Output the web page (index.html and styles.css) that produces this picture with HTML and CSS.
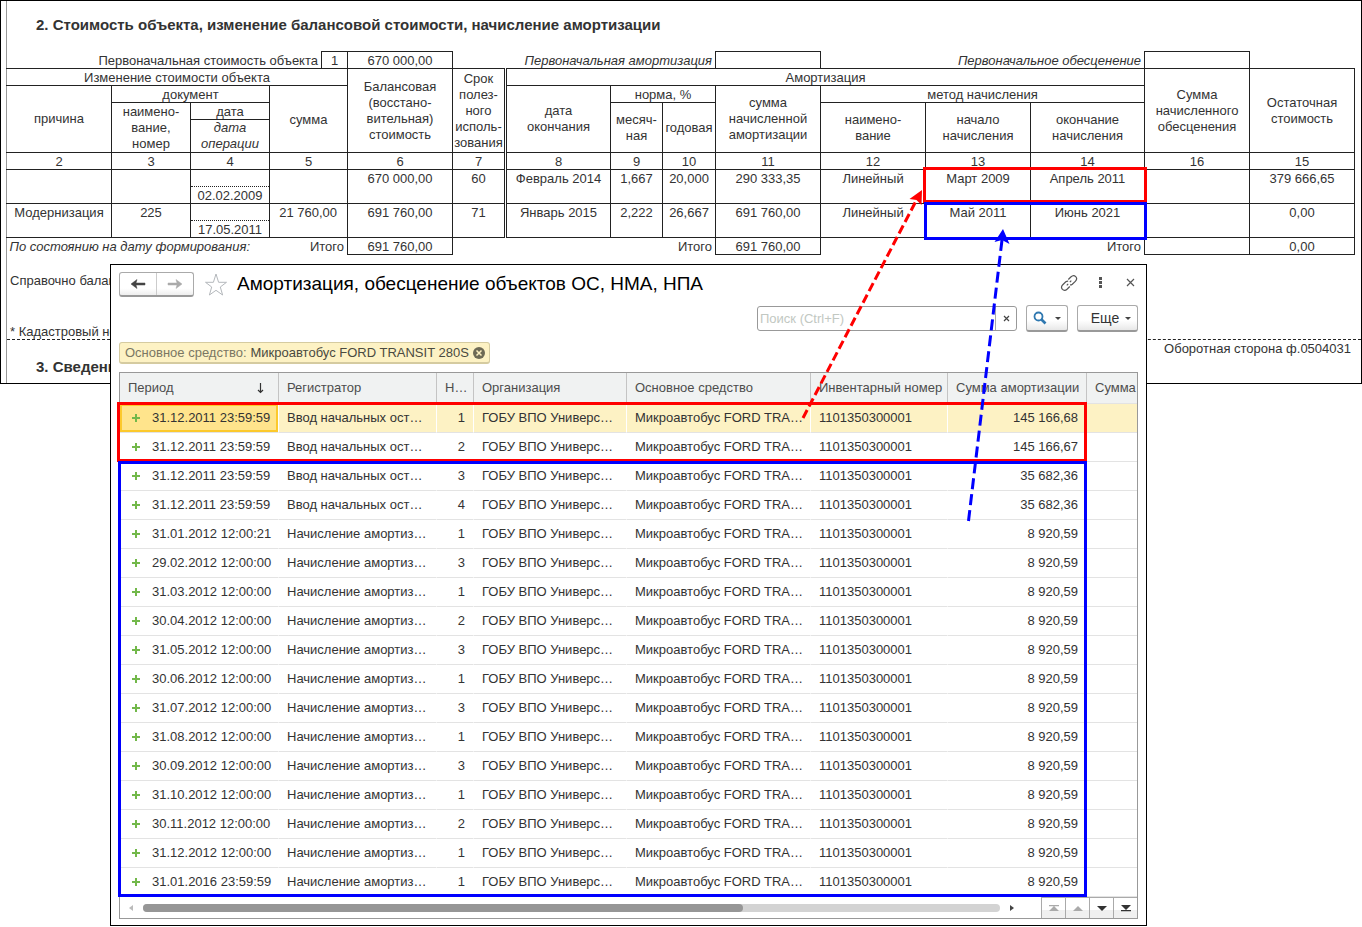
FILE: index.html
```html
<!DOCTYPE html>
<html lang="ru">
<head>
<meta charset="utf-8">
<title>Амортизация, обесценение объектов ОС, НМА, НПА</title>
<link rel="stylesheet" href="styles.css">
</head>
<body>
<main class="stage">
<section class="sheet">
<div class="sheet-inner">
<h2 class="sheet-title">2. Стоимость объекта, изменение балансовой стоимости, начисление амортизации</h2>
<table class="card">
<colgroup><col style="width:105px"><col style="width:79px"><col style="width:79px"><col style="width:52px"><col style="width:26px"><col style="width:105px"><col style="width:53px"><col style="width:105px"><col style="width:52px"><col style="width:53px"><col style="width:105px"><col style="width:105px"><col style="width:105px"><col style="width:114px"><col style="width:105px"><col style="width:105px"></colgroup>
<tbody>
<tr><td class="free r" colspan="4">Первоначальная стоимость объекта</td><td>1</td><td>670 000,00</td><td class="free r it" colspan="4">Первоначальная амортизация</td><td></td><td class="free r it" colspan="3">Первоначальное обесценение</td><td></td><td class="free"></td></tr>
<tr><th colspan="5">Изменение стоимости объекта</th><th rowspan="4">Балансовая<br>(восстано-<br>вительная)<br>стоимость</th><th rowspan="4">Срок<br>полез-<br>ного<br>исполь-<br>зования</th><th class="dbl" colspan="7">Амортизация</th><th rowspan="4">Сумма<br>начисленного<br>обесценения</th><th rowspan="4">Остаточная<br>стоимость</th></tr>
<tr><th rowspan="3">причина</th><th colspan="2">документ</th><th class="tall" colspan="2" rowspan="3">сумма</th><th class="dbl" rowspan="3">дата<br>окончания</th><th colspan="2">норма, %</th><th rowspan="3">сумма<br>начисленной<br>амортизации</th><th colspan="3">метод начисления</th></tr>
<tr><th rowspan="2">наимено-<br>вание,<br>номер</th><th class="single">дата</th><th rowspan="2">месяч-<br>ная</th><th rowspan="2">годовая</th><th rowspan="2">наимено-<br>вание</th><th rowspan="2">начало<br>начисления</th><th rowspan="2">окончание<br>начисления</th></tr>
<tr><th class="it">дата<br>операции</th></tr>
<tr><td>2</td><td>3</td><td>4</td><td colspan="2">5</td><td>6</td><td>7</td><td class="dbl">8</td><td>9</td><td>10</td><td>11</td><td>12</td><td>13</td><td>14</td><td>16</td><td>15</td></tr>
<tr><td rowspan="2"></td><td rowspan="2"></td><td class="dot"></td><td rowspan="2" colspan="2"></td><td rowspan="2">670 000,00</td><td rowspan="2">60</td><td class="dbl" rowspan="2">Февраль 2014</td><td rowspan="2">1,667</td><td rowspan="2">20,000</td><td rowspan="2">290 333,35</td><td rowspan="2">Линейный</td><td rowspan="2">Март 2009</td><td rowspan="2">Апрель 2011</td><td rowspan="2"></td><td rowspan="2">379 666,65</td></tr>
<tr><td class="dotted-top">02.02.2009</td></tr>
<tr><td rowspan="2">Модернизация</td><td rowspan="2">225</td><td class="dot"></td><td class="r" rowspan="2" colspan="2">21 760,00</td><td rowspan="2">691 760,00</td><td rowspan="2">71</td><td class="dbl" rowspan="2">Январь 2015</td><td rowspan="2">2,222</td><td rowspan="2">26,667</td><td rowspan="2">691 760,00</td><td rowspan="2">Линейный</td><td rowspan="2">Май 2011</td><td rowspan="2">Июнь 2021</td><td rowspan="2"></td><td rowspan="2">0,00</td></tr>
<tr><td class="dotted-top">17.05.2011</td></tr>
<tr><td class="free l it" colspan="3">По состоянию на дату формирования:</td><td class="free r" colspan="2">Итого</td><td>691 760,00</td><td class="free r" colspan="4">Итого</td><td>691 760,00</td><td class="free r" colspan="3">Итого</td><td></td><td>0,00</td></tr>
</tbody>
</table>
<p class="note">Справочно балансовая стоимость</p>
<p class="note note-star">* Кадастровый номер</p>
<p class="form-side">Оборотная сторона ф.0504031</p>
<h2 class="sheet-title sheet-next">3. Сведения</h2>
</div>
</section>

<section class="window">
<header class="head">
<div class="nav">
<button type="button" aria-label="Назад"><svg width="16" height="12" viewBox="0 0 16 12"><path d="M1 6L7 1.500L6 5H15V7H6L7 10.500Z" fill="#444" stroke="#444" stroke-width=".5"/></svg></button>
<button type="button" aria-label="Вперед"><svg width="16" height="12" viewBox="0 0 16 12"><path d="M15 6L9 1.500L10 5H1V7H10L9 10.500Z" fill="#aaa" stroke="#aaa" stroke-width=".5"/></svg></button>
</div>
<svg class="star" width="24" height="24" viewBox="0 0 24 24"><path d="M12 1L14.600 9.300H22.500L16.300 14L18.600 22L12 17.300L5.400 22L7.700 14L1.500 9.300H9.400Z" fill="#fff" stroke="#b4b8bc"/></svg>
<h1>Амортизация, обесценение объектов ОС, НМА, НПА</h1>
<div class="win-tools">
<button type="button" aria-label="Ссылка"><svg width="18" height="18" viewBox="0 0 18 18" fill="none" stroke="#555" stroke-width="1.200"><path d="M8.300 5.500L10.800 3Q13.500 .500 15.700 2.600Q17.800 4.800 15.300 7.300L12.300 10.200Q11.300 11 10 10.900M9.800 12.500L7.300 15Q4.600 17.500 2.400 15.400Q.400 13.200 2.800 10.700L5.800 7.800Q6.900 7 8.200 7.100M6.800 11.300L8.200 9.900M9.800 8.200L11.300 6.700"/></svg></button>
<button type="button" aria-label="Меню"><svg width="18" height="18" viewBox="0 0 18 18" fill="#555"><path d="M9 3h3v3H9zM9 7h3v3H9zM9 11h3v3H9z"/></svg></button>
<button type="button" aria-label="Закрыть"><svg width="18" height="18" viewBox="0 0 18 18" stroke="#555" stroke-width="1.200"><path d="M7 5L14 12M14 5L7 12"/></svg></button>
</div>
</header>
<div class="toolbar">
<div class="search"><input type="text" placeholder="Поиск (Ctrl+F)" aria-label="Поиск"><button type="button" aria-label="Очистить"><svg width="9" height="9" viewBox="0 0 9 9" stroke="#444" stroke-width="1.200"><path d="M2 2L7 7M7 2L2 7"/></svg></button></div>
<button class="btn btn-find" type="button" aria-label="Найти"><svg width="14" height="14" viewBox="0 0 14 14" fill="none" stroke="#2f78b0"><circle cx="5.500" cy="5.500" r="4" stroke-width="1.800"/><path d="M8.500 8.500L12.500 12.500" stroke-width="2.600"/></svg><i class="caret"></i></button>
<button class="btn btn-more" type="button">Еще<i class="caret"></i></button>
</div>
<div class="chip"><span>Основное средство:</span> Микроавтобус FORD TRANSIT 280S <button type="button" aria-label="Убрать отбор"><svg width="12" height="12" viewBox="0 0 12 12"><circle cx="6" cy="6" r="6" fill="#6e6a55"/><path d="M3.500 3.500L8.500 8.500M8.500 3.500L3.500 8.500" stroke="#fdf0c0" stroke-width="1.500"/></svg></button></div>
<div class="grid">
<table class="list">
<colgroup><col style="width:159px"><col style="width:158px"><col style="width:37px"><col style="width:153px"><col style="width:184px"><col style="width:137px"><col style="width:139px"><col style="width:50px"></colgroup>
<thead><tr><th><div class="sorted">Период<svg width="9" height="12" viewBox="0 0 9 12" fill="none" stroke="#333" stroke-width="1.200"><path d="M4.500 1V10.500M2 8L4.500 10.500L7 8"/></svg></div></th><th>Регистратор</th><th>Н…</th><th>Организация</th><th>Основное средство</th><th>Инвентарный номер</th><th>Сумма амортизации</th><th>Сумма</th></tr></thead>
<tbody>
<tr class="sel"><td><b class="plus"></b>31.12.2011 23:59:59</td><td>Ввод начальных ост…</td><td>1</td><td>ГОБУ ВПО Универс…</td><td>Микроавтобус FORD TRA…</td><td>1101350300001</td><td>145 166,68</td><td></td></tr>
<tr><td><b class="plus"></b>31.12.2011 23:59:59</td><td>Ввод начальных ост…</td><td>2</td><td>ГОБУ ВПО Универс…</td><td>Микроавтобус FORD TRA…</td><td>1101350300001</td><td>145 166,67</td><td></td></tr>
<tr><td><b class="plus"></b>31.12.2011 23:59:59</td><td>Ввод начальных ост…</td><td>3</td><td>ГОБУ ВПО Универс…</td><td>Микроавтобус FORD TRA…</td><td>1101350300001</td><td>35 682,36</td><td></td></tr>
<tr><td><b class="plus"></b>31.12.2011 23:59:59</td><td>Ввод начальных ост…</td><td>4</td><td>ГОБУ ВПО Универс…</td><td>Микроавтобус FORD TRA…</td><td>1101350300001</td><td>35 682,36</td><td></td></tr>
<tr><td><b class="plus"></b>31.01.2012 12:00:21</td><td>Начисление амортиз…</td><td>1</td><td>ГОБУ ВПО Универс…</td><td>Микроавтобус FORD TRA…</td><td>1101350300001</td><td>8 920,59</td><td></td></tr>
<tr><td><b class="plus"></b>29.02.2012 12:00:00</td><td>Начисление амортиз…</td><td>3</td><td>ГОБУ ВПО Универс…</td><td>Микроавтобус FORD TRA…</td><td>1101350300001</td><td>8 920,59</td><td></td></tr>
<tr><td><b class="plus"></b>31.03.2012 12:00:00</td><td>Начисление амортиз…</td><td>1</td><td>ГОБУ ВПО Универс…</td><td>Микроавтобус FORD TRA…</td><td>1101350300001</td><td>8 920,59</td><td></td></tr>
<tr><td><b class="plus"></b>30.04.2012 12:00:00</td><td>Начисление амортиз…</td><td>2</td><td>ГОБУ ВПО Универс…</td><td>Микроавтобус FORD TRA…</td><td>1101350300001</td><td>8 920,59</td><td></td></tr>
<tr><td><b class="plus"></b>31.05.2012 12:00:00</td><td>Начисление амортиз…</td><td>3</td><td>ГОБУ ВПО Универс…</td><td>Микроавтобус FORD TRA…</td><td>1101350300001</td><td>8 920,59</td><td></td></tr>
<tr><td><b class="plus"></b>30.06.2012 12:00:00</td><td>Начисление амортиз…</td><td>1</td><td>ГОБУ ВПО Универс…</td><td>Микроавтобус FORD TRA…</td><td>1101350300001</td><td>8 920,59</td><td></td></tr>
<tr><td><b class="plus"></b>31.07.2012 12:00:00</td><td>Начисление амортиз…</td><td>3</td><td>ГОБУ ВПО Универс…</td><td>Микроавтобус FORD TRA…</td><td>1101350300001</td><td>8 920,59</td><td></td></tr>
<tr><td><b class="plus"></b>31.08.2012 12:00:00</td><td>Начисление амортиз…</td><td>1</td><td>ГОБУ ВПО Универс…</td><td>Микроавтобус FORD TRA…</td><td>1101350300001</td><td>8 920,59</td><td></td></tr>
<tr><td><b class="plus"></b>30.09.2012 12:00:00</td><td>Начисление амортиз…</td><td>3</td><td>ГОБУ ВПО Универс…</td><td>Микроавтобус FORD TRA…</td><td>1101350300001</td><td>8 920,59</td><td></td></tr>
<tr><td><b class="plus"></b>31.10.2012 12:00:00</td><td>Начисление амортиз…</td><td>1</td><td>ГОБУ ВПО Универс…</td><td>Микроавтобус FORD TRA…</td><td>1101350300001</td><td>8 920,59</td><td></td></tr>
<tr><td><b class="plus"></b>30.11.2012 12:00:00</td><td>Начисление амортиз…</td><td>2</td><td>ГОБУ ВПО Универс…</td><td>Микроавтобус FORD TRA…</td><td>1101350300001</td><td>8 920,59</td><td></td></tr>
<tr><td><b class="plus"></b>31.12.2012 12:00:00</td><td>Начисление амортиз…</td><td>1</td><td>ГОБУ ВПО Универс…</td><td>Микроавтобус FORD TRA…</td><td>1101350300001</td><td>8 920,59</td><td></td></tr>
<tr><td><b class="plus"></b>31.01.2016 23:59:59</td><td>Начисление амортиз…</td><td>1</td><td>ГОБУ ВПО Универс…</td><td>Микроавтобус FORD TRA…</td><td>1101350300001</td><td>8 920,59</td><td></td></tr>
</tbody>
</table>
<div class="foot">
<svg class="tri" width="6" height="8" viewBox="0 0 6 8"><path d="M5 1V7L1 4Z" fill="#bbb"/></svg>
<div class="track"><div class="thumb"></div></div>
<svg class="tri" width="6" height="8" viewBox="0 0 6 8"><path d="M1 1V7L5 4Z" fill="#444"/></svg>
<div class="pager">
<button type="button" aria-label="В начало" disabled><svg width="12" height="8" viewBox="0 0 12 8" fill="#aaa"><path d="M1 1H11V2.200H1ZM6 2L11 7H1Z"/></svg></button>
<button type="button" aria-label="Вверх" disabled><svg width="12" height="8" viewBox="0 0 12 8" fill="#aaa"><path d="M6 2L11 7H1Z"/></svg></button>
<button type="button" aria-label="Вниз"><svg width="12" height="8" viewBox="0 0 12 8" fill="#333"><path d="M1 2H11L6 7Z"/></svg></button>
<button type="button" aria-label="В конец"><svg width="12" height="8" viewBox="0 0 12 8" fill="#333"><path d="M1 1H11L6 6ZM1 6H11V7.200H1Z"/></svg></button>
</div>
</div>
</div>
</section>

<svg class="marks" width="1362" height="926" viewBox="0 0 1362 926" fill="none" stroke-width="3">
<g stroke="#f00"><path d="M924.500 168.500H1145.500V201.500H924.500ZM118.500 403.500H1085.500V460.500H118.500Z"/><path d="M803 418L917 199" stroke-dasharray="9 4"/><path d="M922 190L921.500 205L916.500 200L909.500 199Z" fill="#f00" stroke="none"/></g>
<g stroke="#00f"><path d="M925.500 203.500H1145.500V238.500H925.500ZM119.500 462.500H1085.500V895.500H119.500Z"/><path d="M968.500 521L1002 240" stroke-dasharray="11 5"/><path d="M1003 229L1009.500 244L1002 240L994.500 242Z" fill="#00f" stroke="none"/></g>
</svg>
</main>
</body>
</html>
```

FILE: styles.css
```css
* { box-sizing: border-box; }
body { margin: 0; background: #fff; color: #333; font: 13px/16px "Liberation Sans", Arial, sans-serif; }
h1, h2, p { margin: 0; font-weight: normal; }
button { margin: 0; padding: 0; border: 0; background: none; font: inherit; color: inherit; display: flex; align-items: center; justify-content: center; }
svg { display: block; flex: none; }
.stage { position: relative; display: grid; grid-template-columns: minmax(0, 1fr); align-items: start; }
.sheet, .window { grid-area: 1 / 1; }

.sheet { border: 1px solid #000; padding-left: 5px; }
.sheet-inner { border-left: 1px solid #999; }
.sheet-title { padding: 14px 0 16px 29px; font-size: 15px; line-height: 20px; font-weight: bold; }
.sheet-next { padding: 0 0 6px 29px; }
.card { width: calc(100% - 6px); margin-left: -1px; table-layout: fixed; border-collapse: collapse; }
.card tr { height: 17px; }
.card td, .card th { border: 1px solid #222; padding: 0; font-weight: normal; text-align: center; white-space: nowrap; }
.card td, .card th[colspan], .card .single { padding-top: 2px; line-height: 14px; }
.card td { vertical-align: top; }
.card th:first-child, .card td:first-child { border-left-color: #999; }
.card .free { border: 0; }
.card .dbl { border-left: 3px double #222; }
.card .dot { border-bottom: 1px dotted #222; }
.card .dotted-top { border: 1px solid #222; border-top: 1px dotted #222; }
.card .r { text-align: right; padding-right: 3px; }
.card .l { text-align: left; padding-left: 3px; }
.card td.r[rowspan] { padding-right: 10px; }
.it { font-style: italic; }
.note { padding: 18px 3px 0; }
.note-star { padding: 35px 3px 0; line-height: 15px; border-bottom: 1px dashed #222; }
.form-side { padding: 1px 10px 0 0; text-align: right; }

.window { position: relative; margin: 264px 215px 1px 110px; border: 1px solid #000; background: #fff; padding: 7px 8px 6px; }
.head { display: flex; align-items: center; height: 25px; }
.nav { display: flex; width: 75px; height: 25px; border: 1px solid #aaa; border-bottom: 2px solid #999; border-radius: 3px; background: linear-gradient(#fff 70%, #eee); }
.nav button { flex: 1; }
.nav button + button { border-left: 1px solid #ccc; }
.star { margin: 0 9px 0 10px; }
.head h1 { font-size: 19px; line-height: 24px; padding-bottom: 2px; color: #000; white-space: nowrap; }
.win-tools { display: flex; gap: 12px; margin-left: auto; padding-bottom: 3px; }
.toolbar { display: flex; justify-content: flex-end; align-items: flex-start; gap: 9px; margin-top: 8px; height: 27px; }
.search { display: flex; width: 260px; height: 25px; margin-top: 1px; border: 1px solid #999; border-radius: 3px; }
.search input { flex: 1; min-width: 0; border: 0; outline: 0; padding: 0 2px; background: none; font: inherit; }
.search input::placeholder { color: #c2c8c2; opacity: 1; }
.search button { width: 21px; border-left: 1px solid #aaa; }
.btn { height: 27px; border: 1px solid #aaa; border-bottom: 2px solid #999; border-radius: 3px; background: linear-gradient(#fff 60%, #e8e8e8); gap: 8px; }
.btn-find { width: 42px; }
.btn-more { width: 61px; gap: 6px; padding-left: 7px; font-size: 14px; }
.caret { border: 3px solid transparent; border-top-color: #444; border-bottom: 0; }
.chip { display: flex; width: fit-content; align-items: center; gap: 4px; height: 22px; margin-top: 10px; padding: 0 4px 0 5px; border: 1px solid #d5cba0; border-bottom-width: 2px; border-radius: 3px; background: #fdf2c4; color: #4a4a40; white-space: nowrap; }
.chip span { color: #7b7763; }
.grid { margin-top: 8px; border: 1px solid #999; overflow: hidden; }
.list { width: 100%; table-layout: fixed; border-collapse: separate; border-spacing: 0; }
.list th, .list td { padding: 0 8px; overflow: hidden; text-align: left; font-weight: normal; white-space: nowrap; border-bottom: 1px solid #e3e3e3; }
.list th { height: 31px; background: #f0f2f2; color: #4d4d4d; border-right: 1px solid #c4c4c4; }
.list td { height: 29px; color: #333; border-right: 1px solid #fff; }
.list th:last-child, .list td:last-child { border-right: 0; padding-right: 0; }
.list td:nth-child(3), .list td:nth-child(7) { text-align: right; }
.list .sel td { background: #fdf2c4; border-right-color: #fff; }
.list .sel td:first-child { background: #ffe48c; box-shadow: inset 0 0 0 2px #fcc92c; }
.sorted { display: flex; justify-content: space-between; padding-right: 5px; align-items: center; }
.plus { display: inline-block; width: 8px; height: 8px; margin: 0 12px 0 4px; background: linear-gradient(#72b84a, #72b84a) center / 8px 2px no-repeat, linear-gradient(#72b84a, #72b84a) center / 2px 8px no-repeat; }
.foot { display: flex; align-items: center; height: 21px; padding-left: 8px; }
.track { flex: 1; height: 8px; margin: 0 9px; border-radius: 4px; background: #d3d3d3; }
.thumb { width: 70%; height: 8px; border-radius: 4px; background: #969696; }
.pager { display: flex; height: 21px; margin-left: 26px; }
.pager button { width: 24px; border-left: 1px solid #aaa; border-top: 1px solid #aaa; background: linear-gradient(#fff 60%, #f0f0f0 60%); }
.marks { position: absolute; top: 0; left: 0; pointer-events: none; }
```
